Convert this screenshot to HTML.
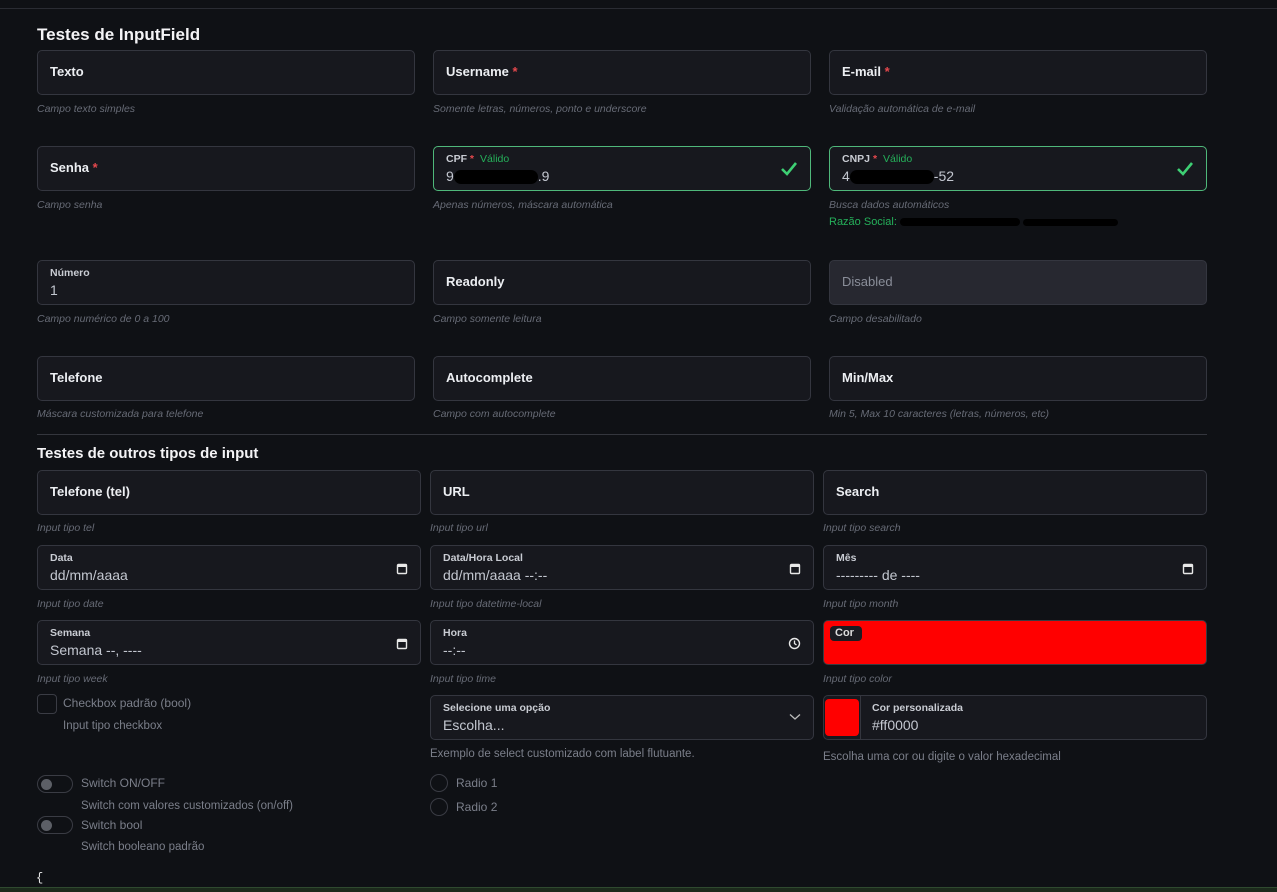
<!DOCTYPE html>
<html><head><meta charset="utf-8"><style>
body{margin:0;width:1277px;height:891px;background:#0f1115;font-family:"Liberation Sans",sans-serif;position:relative;overflow:hidden}
.a{position:absolute}
.b{position:absolute;height:45px;border:1px solid #34363f;border-radius:5px;background:#17181e;box-sizing:border-box}
.l{position:absolute;left:12px;top:13px;font-size:13px;font-weight:bold;color:#eceef2}
.fl{position:absolute;left:12px;top:6px;font-size:10.5px;font-weight:bold;color:#c9ccd3}
.v{position:absolute;left:12px;top:21px;font-size:14px;color:#c3c7d0}
.r{color:#e5484d}
.h{position:absolute;font-size:10.5px;font-style:italic;color:#676b76}
.p{position:absolute;font-size:12px;color:#7b7f8a}
.hd{position:absolute;left:37px;font-size:17px;font-weight:bold;color:#f4f4f6}
.ok{border-color:#4fb87a}
.g{color:#25b05a;font-weight:normal;margin-left:6px}
.ic{position:absolute;right:12px;top:14px}
.sw{position:absolute;width:36px;height:18px;border:1px solid #3a3c44;border-radius:10px;box-sizing:border-box}
.sw:after{content:"";position:absolute;left:3px;top:3px;width:11px;height:11px;border-radius:50%;background:#5c5f66}
.rd{position:absolute;width:18px;height:18px;border:1px solid #3a3c44;border-radius:50%;box-sizing:border-box}
</style></head><body>
<div class="a" style="left:0;top:8px;width:1277px;height:1px;background:#2a2c33"></div>
<div class="hd" style="top:25px">Testes de InputField</div>

<div class="b" style="left:37px;top:50px;width:378px"><div class="l">Texto</div></div>
<div class="b" style="left:433px;top:50px;width:378px"><div class="l">Username <span class="r">*</span></div></div>
<div class="b" style="left:829px;top:50px;width:378px"><div class="l">E-mail <span class="r">*</span></div></div>
<div class="h" style="left:37px;top:103px">Campo texto simples</div>
<div class="h" style="left:433px;top:103px">Somente letras, números, ponto e underscore</div>
<div class="h" style="left:829px;top:103px">Validação automática de e-mail</div>

<div class="b" style="left:37px;top:146px;width:378px"><div class="l">Senha <span class="r">*</span></div></div>
<div class="b ok" style="left:433px;top:146px;width:378px"><div class="fl">CPF <span class="r">*</span><span class="g">Válido</span></div><div class="v">9<span style="display:inline-block;width:84px;height:14px;background:#000;border-radius:7px;vertical-align:middle"></span>.9</div>
<svg class="ic" width="18" height="16" viewBox="0 0 18 16"><path d="M2 8l5 5L16 2" stroke="#3ecf74" stroke-width="2.6" fill="none"/></svg></div>
<div class="b ok" style="left:829px;top:146px;width:378px"><div class="fl">CNPJ <span class="r">*</span><span class="g">Válido</span></div><div class="v">4<span style="display:inline-block;width:84px;height:14px;background:#000;border-radius:7px;vertical-align:middle"></span>-52</div>
<svg class="ic" width="18" height="16" viewBox="0 0 18 16"><path d="M2 8l5 5L16 2" stroke="#3ecf74" stroke-width="2.6" fill="none"/></svg></div>
<div class="h" style="left:37px;top:199px">Campo senha</div>
<div class="h" style="left:433px;top:199px">Apenas números, máscara automática</div>
<div class="h" style="left:829px;top:199px">Busca dados automáticos</div>
<div class="a" style="left:829px;top:216px;font-size:11px;color:#25b05a">Razão Social: <span style="display:inline-block;width:120px;height:8px;background:#000;border-radius:4px;vertical-align:middle"></span> <span style="display:inline-block;width:95px;height:7px;background:#000;border-radius:4px;vertical-align:middle"></span></div>

<div class="b" style="left:37px;top:260px;width:378px"><div class="fl">Número</div><div class="v">1</div></div>
<div class="b" style="left:433px;top:260px;width:378px"><div class="l">Readonly</div></div>
<div class="b" style="left:829px;top:260px;width:378px;background:#272830"><div class="l" style="font-weight:normal;color:#8a8e99">Disabled</div></div>
<div class="h" style="left:37px;top:313px">Campo numérico de 0 a 100</div>
<div class="h" style="left:433px;top:313px">Campo somente leitura</div>
<div class="h" style="left:829px;top:313px">Campo desabilitado</div>

<div class="b" style="left:37px;top:356px;width:378px"><div class="l">Telefone</div></div>
<div class="b" style="left:433px;top:356px;width:378px"><div class="l">Autocomplete</div></div>
<div class="b" style="left:829px;top:356px;width:378px"><div class="l">Min/Max</div></div>
<div class="h" style="left:37px;top:408px">Máscara customizada para telefone</div>
<div class="h" style="left:433px;top:408px">Campo com autocomplete</div>
<div class="h" style="left:829px;top:408px">Min 5, Max 10 caracteres (letras, números, etc)</div>

<div class="a" style="left:37px;top:434px;width:1170px;height:1px;background:#34363d"></div>
<div class="hd" style="top:445px;font-size:15px">Testes de outros tipos de input</div>

<div class="b" style="left:37px;top:470px;width:384px"><div class="l">Telefone (tel)</div></div>
<div class="b" style="left:430px;top:470px;width:384px"><div class="l">URL</div></div>
<div class="b" style="left:823px;top:470px;width:384px"><div class="l">Search</div></div>
<div class="h" style="left:37px;top:522px">Input tipo tel</div>
<div class="h" style="left:430px;top:522px">Input tipo url</div>
<div class="h" style="left:823px;top:522px">Input tipo search</div>

<svg width="0" height="0" style="position:absolute"><defs><g id="cal"><rect x="1.5" y="2.5" width="9" height="9" rx="1" stroke="#e8e8e8" stroke-width="1.4" fill="none"/><rect x="1.5" y="2.5" width="9" height="2.5" fill="#e8e8e8"/></g></defs></svg>
<div class="b" style="left:37px;top:545px;width:384px"><div class="fl">Data</div><div class="v">dd/mm/aaaa</div><svg class="ic" style="top:16px" width="12" height="13"><use href="#cal"/></svg></div>
<div class="b" style="left:430px;top:545px;width:384px"><div class="fl">Data/Hora Local</div><div class="v">dd/mm/aaaa --:--</div><svg class="ic" style="top:16px" width="12" height="13"><use href="#cal"/></svg></div>
<div class="b" style="left:823px;top:545px;width:384px"><div class="fl">Mês</div><div class="v">--------- de ----</div><svg class="ic" style="top:16px" width="12" height="13"><use href="#cal"/></svg></div>
<div class="h" style="left:37px;top:598px">Input tipo date</div>
<div class="h" style="left:430px;top:598px">Input tipo datetime-local</div>
<div class="h" style="left:823px;top:598px">Input tipo month</div>

<div class="b" style="left:37px;top:620px;width:384px"><div class="fl">Semana</div><div class="v">Semana --, ----</div><svg class="ic" style="top:16px" width="12" height="13"><use href="#cal"/></svg></div>
<div class="b" style="left:430px;top:620px;width:384px"><div class="fl">Hora</div><div class="v">--:--</div><svg class="ic" style="top:16px" width="13" height="13"><circle cx="6.5" cy="6.5" r="5" stroke="#e8e8e8" stroke-width="1.4" fill="none"/><path d="M6.5 3.5v3l2 1.5" stroke="#e8e8e8" stroke-width="1.3" fill="none"/></svg></div>
<div class="b" style="left:823px;top:620px;width:384px;background:#ff0000;border-color:#3a3a40"><div class="a" style="left:6px;top:5px;background:#1b1c22;border-radius:4px;padding:1px 8px 2px 5px;font-size:11px;font-weight:bold;color:#ddd">Cor</div></div>
<div class="h" style="left:37px;top:673px">Input tipo week</div>
<div class="h" style="left:430px;top:673px">Input tipo time</div>
<div class="h" style="left:823px;top:673px">Input tipo color</div>

<div class="a" style="left:37px;top:694px;width:20px;height:20px;border:1px solid #3a3c44;border-radius:4px;box-sizing:border-box"></div>
<div class="p" style="left:63px;top:696px">Checkbox padrão (bool)</div>
<div class="p" style="left:63px;top:720px;font-size:11.5px">Input tipo checkbox</div>

<div class="b" style="left:430px;top:695px;width:384px"><div class="fl">Selecione uma opção</div><div class="v">Escolha...</div><svg class="ic" style="top:17px" width="12" height="8"><path d="M1 1.5l5 4.5 5-4.5" stroke="#bbb" stroke-width="1.3" fill="none"/></svg></div>
<div class="p" style="left:430px;top:748px;font-size:11.5px">Exemplo de select customizado com label flutuante.</div>

<div class="b" style="left:823px;top:695px;width:384px"><div class="a" style="left:1px;top:3px;width:34px;height:37px;background:#ff0000;border-radius:4px"></div><div class="a" style="left:36px;top:0;width:1px;height:43px;background:#34363f"></div><div class="fl" style="left:48px">Cor personalizada</div><div class="v" style="left:48px">#ff0000</div></div>
<div class="p" style="left:823px;top:751px;font-size:11.5px">Escolha uma cor ou digite o valor hexadecimal</div>

<div class="sw" style="left:37px;top:775px"></div>
<div class="p" style="left:81px;top:776px">Switch ON/OFF</div>
<div class="p" style="left:81px;top:800px;font-size:11.5px">Switch com valores customizados (on/off)</div>
<div class="sw" style="left:37px;top:816px"></div>
<div class="p" style="left:81px;top:818px">Switch bool</div>
<div class="p" style="left:81px;top:841px;font-size:11.5px">Switch booleano padrão</div>

<div class="rd" style="left:430px;top:774px"></div>
<div class="p" style="left:456px;top:776px">Radio 1</div>
<div class="rd" style="left:430px;top:798px"></div>
<div class="p" style="left:456px;top:800px">Radio 2</div>

<div class="a" style="left:36px;top:871px;font-size:12px;color:#e8e8e8;font-family:'Liberation Mono',monospace">{</div>
<div class="a" style="left:0;top:887px;width:1277px;height:4px;background:#1c2a1c;border-top:1px solid #2f4a2f"></div>
</body></html>
